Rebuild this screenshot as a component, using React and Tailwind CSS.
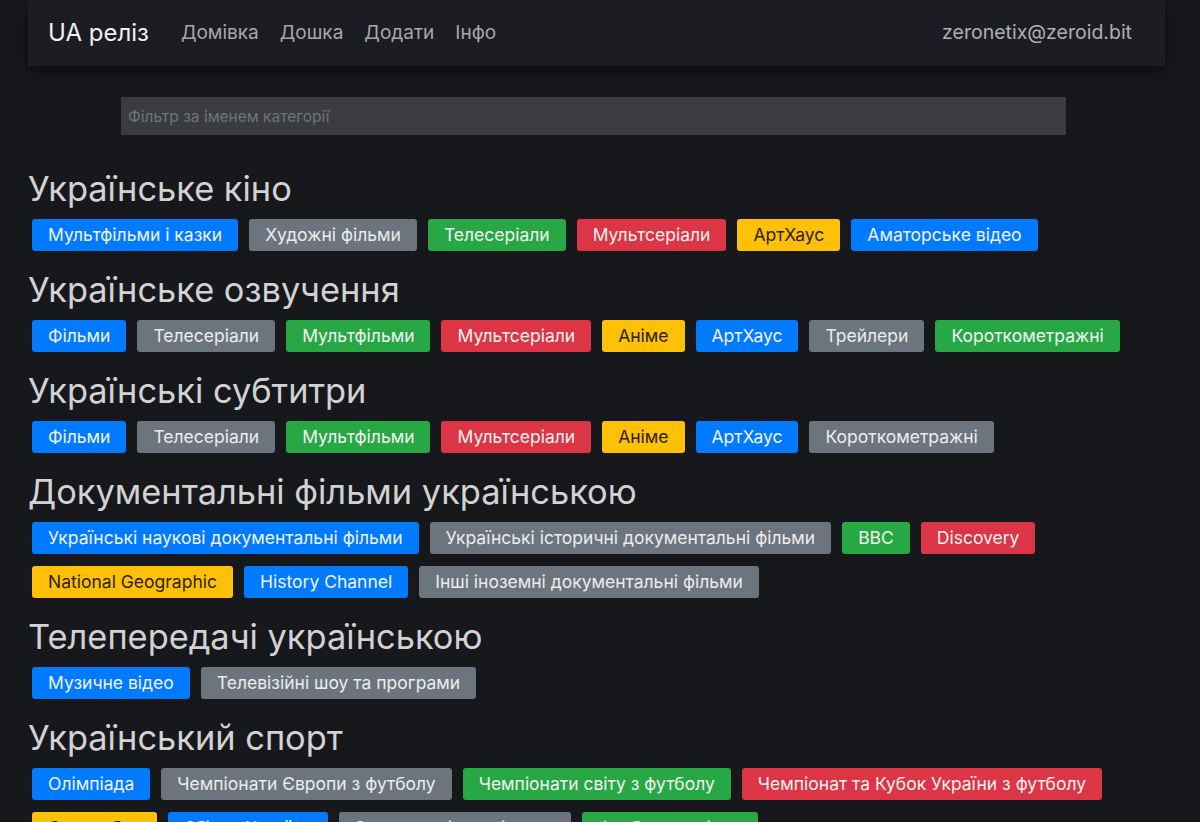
import React from 'react';

const colors = {
  blue: 'bg-[#007bff] text-[#f2f2f2]',
  gray: 'bg-[#6c757d] text-[#ececec]',
  green: 'bg-[#28a745] text-[#f2f2f2]',
  red: 'bg-[#dc3545] text-[#f2f2f2]',
  yellow: 'bg-[#ffc107] text-[#2b2308]',
};

const sections = [
  {
    title: 'Українське кіно',
    items: [
      ['Мультфільми і казки', 'blue'],
      ['Художні фільми', 'gray'],
      ['Телесеріали', 'green'],
      ['Мультсеріали', 'red'],
      ['АртХаус', 'yellow'],
      ['Аматорське відео', 'blue'],
    ],
  },
  {
    title: 'Українське озвучення',
    items: [
      ['Фільми', 'blue'],
      ['Телесеріали', 'gray'],
      ['Мультфільми', 'green'],
      ['Мультсеріали', 'red'],
      ['Аніме', 'yellow'],
      ['АртХаус', 'blue'],
      ['Трейлери', 'gray'],
      ['Короткометражні', 'green'],
    ],
  },
  {
    title: 'Українські субтитри',
    items: [
      ['Фільми', 'blue'],
      ['Телесеріали', 'gray'],
      ['Мультфільми', 'green'],
      ['Мультсеріали', 'red'],
      ['Аніме', 'yellow'],
      ['АртХаус', 'blue'],
      ['Короткометражні', 'gray'],
    ],
  },
  {
    title: 'Документальні фільми українською',
    items: [
      ['Українські наукові документальні фільми', 'blue'],
      ['Українські історичні документальні фільми', 'gray'],
      ['BBC', 'green'],
      ['Discovery', 'red'],
      ['National Geographic', 'yellow'],
      ['History Channel', 'blue'],
      ['Інші іноземні документальні фільми', 'gray'],
    ],
  },
  {
    title: 'Телепередачі українською',
    items: [
      ['Музичне відео', 'blue'],
      ['Телевізійні шоу та програми', 'gray'],
    ],
  },
  {
    title: 'Український спорт',
    items: [
      ['Олімпіада', 'blue'],
      ['Чемпіонати Європи з футболу', 'gray'],
      ['Чемпіонати світу з футболу', 'green'],
      ['Чемпіонат та Кубок України з футболу', 'red'],
      ['Єврокубки', 'yellow'],
      ['Збірна України', 'blue'],
      ['Закордонні чемпіонати', 'gray'],
      ['Футбольне відео', 'green'],
    ],
  },
];

const inter = { fontFamily: 'Inter, "Noto Sans", sans-serif' };

const Badge = ({ label, color }) => (
  <a
    href="#"
    className={`inline-block px-4 py-1 rounded-[3px] text-[17.5px] leading-6 whitespace-nowrap ${colors[color]}`}
    style={inter}
  >
    {label}
  </a>
);

export default function App() {
  return (
    <div className="min-h-screen bg-[#17181c]">
      <div className="w-[1137px] ml-7">
        {/* Navbar */}
        <nav
          className="h-[66px] flex items-center pl-5 pr-[33px] bg-[#1c1d22] shadow-[0_6px_16px_rgba(0,0,0,0.45)]"
          style={inter}
        >
          <span className="text-[24px] text-[#f0f0f0] mr-[32px]">UA реліз</span>
          <div className="flex gap-[21px] text-[19px] text-[#a8a8a8]">
            <a href="#">Домівка</a>
            <a href="#">Дошка</a>
            <a href="#">Додати</a>
            <a href="#">Інфо</a>
          </div>
          <span className="ml-auto text-[19.5px] text-[#b0b0b0]">zeronetix@zeroid.bit</span>
        </nav>

        {/* Filter */}
        <div className="mt-[31px] w-[945px] ml-[93px]">
          <input
            type="text"
            placeholder="Фільтр за іменем категорії"
            className="w-full h-[38px] px-[7px] bg-[#3b3c3f] text-[15.5px] text-[#ddd] placeholder:text-[#6e747a] outline-none"
            style={inter}
          />
        </div>

        {/* Categories */}
        <div className="mt-[35px]">
          {sections.map((s) => (
            <section key={s.title} className="mb-5">
              <h2 className="text-[34.4px] leading-[37px] text-[#d2d2d2] mb-3" style={inter}>
                {s.title}
              </h2>
              <div className="flex flex-wrap gap-x-[11px] gap-y-3 pl-1">
                {s.items.map(([label, color]) => (
                  <Badge key={label} label={label} color={color} />
                ))}
              </div>
            </section>
          ))}
        </div>
      </div>
    </div>
  );
}
